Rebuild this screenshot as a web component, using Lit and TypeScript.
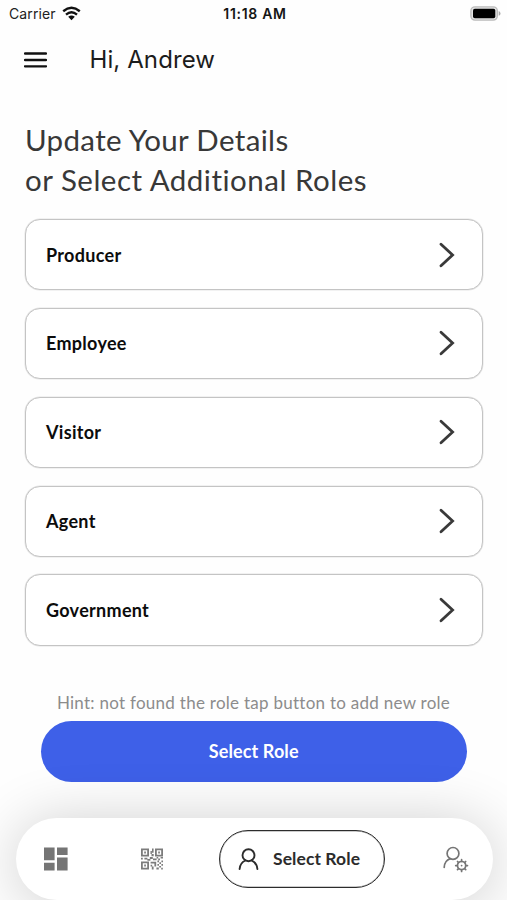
import { LitElement, html, css } from "lit";
import { customElement } from "lit/decorators.js";

@customElement("role-card")
class RoleCard extends LitElement {
  static styles = css`
    :host {
      display: flex;
      align-items: center;
      justify-content: space-between;
      box-sizing: border-box;
      height: 71.2px;
      padding: 0 27px 0 20px;
      border: 1px solid #c4c4c4;
      border-radius: 15px;
      background: #fff;
      box-shadow: 0 0 0 0.5px #e4e4e4;
    }
    .label {
      font: 700 18px/24px Lato, sans-serif;
      letter-spacing: 0.3px;
      color: #0c0c0c;
      white-space: nowrap;
    }
    svg {
      display: block;
    }
  `;
  render() {
    return html`<span class="label"><slot></slot></span>
      <svg width="16" height="26" viewBox="0 0 16 26" fill="none" stroke="#3a3a3a" stroke-width="2.8" stroke-linecap="round">
        <path d="M2 2.2 13.6 13 2 23.8" />
      </svg>`;
  }
}

@customElement("app-root")
class AppRoot extends LitElement {
  static styles = css`
    :host {
      display: flex;
      flex-direction: column;
      box-sizing: border-box;
      width: 100%;
      height: 900px;
      overflow: hidden;
      background: #fefefe;
      font-family: Lato, sans-serif;
    }
    svg {
      display: block;
      flex: none;
    }
    .status {
      display: grid;
      grid-template-columns: 1fr auto 1fr;
      align-items: center;
      height: 28px;
      padding: 0 6px 0 9px;
      font: 400 14px/20px Inter, sans-serif;
      color: #222;
    }
    .carrier {
      display: flex;
      align-items: center;
      gap: 6px;
    }
    .carrier span {
      letter-spacing: 0.1px;
    }
    .carrier svg {
      margin-bottom: 1px;
    }
    .time {
      font-weight: 600;
      letter-spacing: 0.7px;
      color: #151515;
    }
    .battery {
      justify-self: end;
      margin-bottom: 1px;
    }
    .bar {
      display: flex;
      align-items: center;
      height: 64px;
      padding-left: 24px;
      gap: 42.5px;
      font: 400 24px/30px Inter, sans-serif;
      color: #1c1c1c;
    }
    .hello {
      letter-spacing: 0.1px;
    }
    h1 {
      margin: 28px 0 0 25px;
      font: 400 29.5px/40.5px Lato, sans-serif;
      color: #383838;
      white-space: nowrap;
    }
    h1 span {
      display: block;
      width: max-content;
      letter-spacing: 0.34px;
    }
    h1 span + span {
      letter-spacing: 0.5px;
    }
    .cards {
      display: flex;
      flex-direction: column;
      gap: 17.7px;
      margin: 18px 24.5px 0 25px;
    }
    .hint {
      margin: 45px 0 0;
      text-align: center;
      font-size: 17px;
      line-height: 24px;
      letter-spacing: 0.27px;
      color: #8c8c8c;
      white-space: nowrap;
    }
    .cta {
      flex: none;
      height: 61px;
      margin: 6.4px 40px 0 40.5px;
      padding: 0 0 2px;
      border: 0;
      border-radius: 31px;
      background: #3e60e8;
      color: #fff;
      font: 700 18px/24px Lato, sans-serif;
      letter-spacing: 0.1px;
    }
    .nav {
      position: relative;
      flex: none;
      display: flex;
      align-items: center;
      box-sizing: border-box;
      height: 82px;
      margin: 36px 14.5px 0 16px;
      padding: 0 24px 0 28px;
      border-radius: 41px;
      background: #fff;
      box-shadow: 0 4px 60px rgba(0, 0, 0, 0.2);
    }
    .qr {
      margin-left: 73px;
    }
    .pill {
      display: flex;
      align-items: center;
      box-sizing: border-box;
      width: 166px;
      height: 58px;
      margin: 0 auto 0 56px;
      padding-left: 18px;
      gap: 14px;
      border: 1px solid #2c2c2c;
      border-radius: 29px;
      box-shadow: inset 0 0 0 0.5px #999;
      font: 700 17.5px/24px Lato, sans-serif;
      letter-spacing: 0.08px;
      color: #2c2c2c;
      white-space: nowrap;
    }
  `;

  render() {
    return html`
      <div class="status">
        <div class="carrier">
          <span>Carrier</span>
          <svg width="19" height="15" viewBox="0 0 19 15" fill="none" stroke="#111" stroke-width="2.4">
            <path d="M1.2 5.2Q9.5-1.5 17.8 5.2M4 8.6Q9.5 4 15 8.6" />
            <path d="M6.2 10.8Q9.5 8.2 12.8 10.8L9.5 14.2Z" fill="#111" stroke="none" />
          </svg>
        </div>
        <div class="time">11:18 AM</div>
        <svg class="battery" width="31" height="15" viewBox="0 0 31 15">
          <rect x=".9" y=".9" width="26.4" height="13.2" rx="4" fill="#e4e4e4" stroke="#bbb" stroke-width="1.4" />
          <rect x="3" y="2.8" width="22.3" height="9.4" rx="1.8" fill="#000" />
          <path d="M28.7 5Q30.5 5.6 30.5 7.4T28.7 9.8Z" fill="#aaa" />
        </svg>
      </div>
      <div class="bar">
        <svg width="23" height="16" viewBox="0 0 23 16" stroke="#111" stroke-width="2.3" stroke-linecap="round">
          <path d="M1 1.5H22M1 8H22M1 14.3H22" />
        </svg>
        <span class="hello">Hi, Andrew</span>
      </div>
      <h1><span>Update Your Details</span><span>or Select Additional Roles</span></h1>
      <div class="cards">
        ${["Producer", "Employee", "Visitor", "Agent", "Government"].map(
          (name) => html`<role-card>${name}</role-card>`
        )}
      </div>
      <p class="hint">Hint: not found the role tap button to add new role</p>
      <button class="cta">Select Role</button>
      <div class="nav">
        <svg width="24" height="24" viewBox="0 0 24 24" fill="#757575">
          <path d="M0 .5h10.6v12.7H0zM13 .5h10.6v7.4H13zM0 15.8h10.6v7.7H0zM13 10.5h10.6v13H13z" />
        </svg>
        <svg class="qr" width="22" height="22" viewBox="0 0 22 22" fill="#7c7c7c">
          <path
            fill-rule="evenodd"
            d="M0 .5h8v8H0zM1.8 2.3v4.4h4.4V2.3zM14 .5h8v8h-8zM15.8 2.3v4.4h4.4V2.3zM0 13.5h8v8H0zM1.8 15.3v4.4h4.4v-4.4z"
          />
          <path
            d="M3.2 3.6h1.7v1.8H3.2zM17.2 3.6h1.7v1.8h-1.7zM3.2 16.6h1.7v1.8H3.2zM9.5 3h1.4v3H9.5zM11 .5h1.6v4.2H11zM10.5 6h2.2v2.3h-2.2zM0 9.8h1.8v1.7H0zM3.4 9.8h3v1.6h-3zM6.4 11h3v1.7h-3zM8.8 9h3v2h-3zM12 10.4h3.6v1.8H12zM15.6 9h1.6v1.6h-1.6zM17.2 10.6h1.8v1.6h-1.8zM19.6 9h2.4v1.6h-2.4zM9.6 13.8h5.6v1.8H9.6zM13.4 15.4h1.8v3h-1.8zM9.6 16.8h1.6v1.6H9.6zM10.8 18.6h1.8v2.9h-1.8zM16.4 12.4H18v1.8h-1.6zM18.4 14.2H20v1.8h-1.6zM20.4 12.4H22v1.8h-1.6zM16.4 16H18v1.8h-1.6zM20.4 16H22v1.8h-1.6zM18.2 18H20v1.6h-1.8zM15.4 19.6h2.4v1.9h-2.4zM20.2 19.8h1.6v1.7h-1.6z"
          />
        </svg>
        <div class="pill">
          <svg width="21" height="22" viewBox="0 0 21 22" fill="none" stroke="#2c2c2c" stroke-width="1.9" stroke-linecap="round">
            <circle cx="10.5" cy="7.2" r="6" />
            <path d="M1.6 21C1.9 16.6 4 14 7.4 12.5M13.6 12.5C17 14 19.1 16.6 19.4 21" />
          </svg>
          <span>Select Role</span>
        </div>
        <svg width="26" height="27" viewBox="0 0 26 27" fill="none" stroke="#757575" stroke-width="1.7" stroke-linecap="round">
          <circle cx="10" cy="7.4" r="5.9" />
          <path d="M1.2 21.4C1.4 17 3.6 14 7.2 12.8" />
          <circle cx="18.6" cy="19.6" r="4.1" />
          <path
            d="M18.6 15.3V13.7M18.6 23.9V25.5M14.3 19.6H12.7M22.9 19.6H24.5M15.6 16.6 14.5 15.5M21.6 22.6 22.7 23.7M15.6 22.6 14.5 23.7M21.6 16.6 22.7 15.5"
          />
          <circle cx="18.6" cy="19.6" r=".9" fill="#757575" stroke="none" />
        </svg>
      </div>
    `;
  }
}
